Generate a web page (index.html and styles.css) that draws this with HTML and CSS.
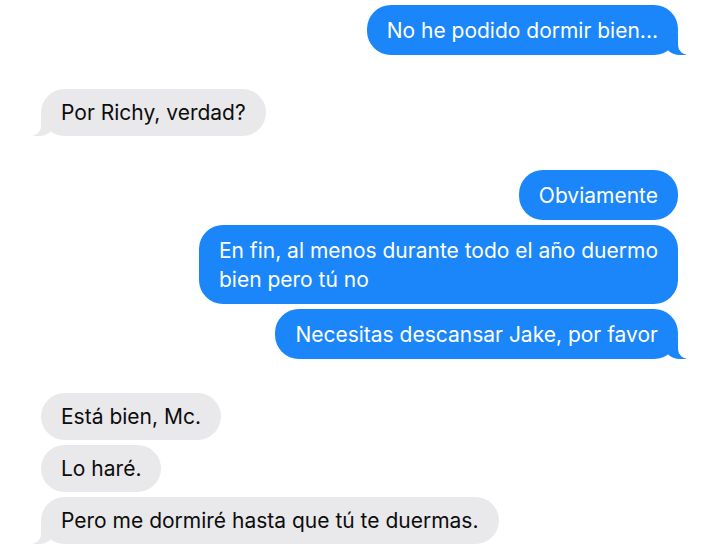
FILE: index.html
```html
<!DOCTYPE html>
<html lang="es">
<head>
<meta charset="utf-8">
<link rel="stylesheet" href="styles.css">
</head>
<body>
<div class="chat">
  <div class="group sent">
    <div class="bubble tail">No he podido dormir bien...</div>
  </div>
  <div class="group received">
    <div class="bubble tail">Por Richy, verdad?</div>
  </div>
  <div class="group sent">
    <div class="bubble">Obviamente</div>
    <div class="bubble">En fin, al menos durante todo el año duermo<br>bien pero tú no</div>
    <div class="bubble tail">Necesitas descansar Jake, por favor</div>
  </div>
  <div class="group received">
    <div class="bubble">Está bien, Mc.</div>
    <div class="bubble">Lo haré.</div>
    <div class="bubble tail">Pero me dormiré hasta que tú te duermas.</div>
  </div>
</div>
</body>
</html>
```
FILE: styles.css
```css
html, body {
  margin: 0;
  padding: 0;
  background: #ffffff;
}
body {
  font-family: Inter, "Liberation Sans", Arial, sans-serif;
  font-size: 21px;
}
.chat {
  display: flex;
  flex-direction: column;
  gap: 34px;
  padding: 5px 42px 0 41px;
}
.group {
  display: flex;
  flex-direction: column;
  gap: 5px;
}
.sent {
  align-items: flex-end;
}
.received {
  align-items: flex-start;
}
.bubble {
  position: relative;
  border-radius: 24px;
  line-height: 29px;
  padding: 10.5px 20px;
}
.sent .bubble {
  background: #1b86fa;
  color: #ffffff;
}
.received .bubble {
  background: #e9e9eb;
  color: #0d0d0d;
  padding: 9px 20px;
}
.bubble.tail::before,
.bubble.tail::after {
  content: "";
  position: absolute;
  bottom: 0;
  height: 22px;
}
.sent .bubble.tail::before {
  right: -8px;
  width: 22px;
  background: #1b86fa;
  border-bottom-left-radius: 16px 14px;
}
.sent .bubble.tail::after {
  right: -12px;
  width: 12px;
  background: #ffffff;
  border-bottom-left-radius: 10px;
}
.received .bubble.tail::before {
  left: -8px;
  width: 22px;
  background: #e9e9eb;
  border-bottom-right-radius: 16px 14px;
}
.received .bubble.tail::after {
  left: -12px;
  width: 12px;
  background: #ffffff;
  border-bottom-right-radius: 10px;
}
```
